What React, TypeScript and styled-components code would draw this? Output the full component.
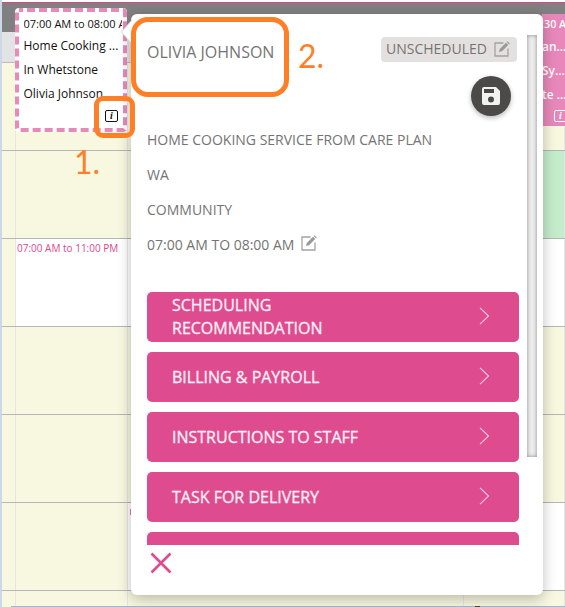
import React from "react";
import styled, { createGlobalStyle } from "styled-components";

const Global = createGlobalStyle`
  * { box-sizing: border-box; }
  body { margin: 0; background: #fff; font-family: "Open Sans", sans-serif; overflow: hidden; }
`;

const Page = styled.div`
  position: relative;
  width: 565px;
  height: 607px;
  padding-top: 2px;
  border-left: 2px solid #cdd7ea;
  overflow: hidden;
  background: #fff;
`;
const HeaderBar = styled.div`
  height: 30px;
  border-top: 1px solid #d94688;
  background: #808080;
`;
const SubHeader = styled.div`
  height: 31px;
  background: #e2e3e4;
  border-bottom: 1px solid #bcbcbe;
`;
const Grid = styled.div`
  display: flex;
  flex-direction: column;
`;
const Row = styled.div`
  display: grid;
  grid-template-columns: 14px 112px 336px 1fr;
  height: 88px;
  border-bottom: 1px solid #b5b5ba;
`;
const Cell = styled.div<{ $bg?: string }>`
  background: ${(p) => p.$bg || "#f8f8e0"};
  border-right: 1px solid #e6e6e4;
`;
const Shift = styled.div`
  padding: 2px 0 0 1px;
  font-size: 10px;
  line-height: 14px;
  white-space: nowrap;
  color: #dc4a8d;
`;
const Sliver = styled.div`
  width: 2px;
  height: 6px;
  margin: 6px 0 0 2px;
  background: #e479ab;
`;
const BottomLine = styled.div`
  position: absolute;
  left: 9px;
  right: 0;
  bottom: 0;
  height: 1px;
  background: #a9b4cc;
`;
const Tick = styled.div`
  position: absolute;
  left: 473px;
  bottom: 0;
  width: 5px;
  height: 1px;
  background: #59443c;
`;

const Visit = styled.div`
  position: absolute;
  left: 13px;
  top: 8px;
  width: 112px;
  height: 124px;
  padding: 7px 0 0 8.5px;
  background: #fff;
  border-radius: 4px;
  overflow: hidden;
`;
const Dashes = styled.svg`
  position: absolute;
  inset: 0;
`;
const VisitLine = styled.div<{ $small?: boolean }>`
  width: ${(p) => (p.$small ? 98 : 102)}px;
  overflow: hidden;
  white-space: nowrap;
  color: #111;
  font-size: ${(p) => (p.$small ? 11 : 12)}px;
  line-height: ${(p) => (p.$small ? 17 : 24)}px;
  height: ${(p) => (p.$small ? 19 : 24)}px;
`;
const InfoBox = styled.div<{ $light?: boolean }>`
  position: absolute;
  left: ${(p) => (p.$light ? 12 : 90)}px;
  top: ${(p) => (p.$light ? 96 : 102)}px;
  width: 13px;
  height: 12px;
  border: 1px solid ${(p) => (p.$light ? "#fff" : "#111")};
  border-radius: 2px;
  color: ${(p) => (p.$light ? "#fff" : "#111")};
  font: italic bold 10px/10px "Liberation Serif", serif;
  text-align: center;
`;
const PinkVisit = styled.div`
  position: absolute;
  left: 540px;
  top: 14px;
  width: 23px;
  height: 112px;
  background: #e888ba;
  overflow: hidden;
  color: #fff;
  font-weight: 600;
`;
const PinkLine = styled.div<{ $small?: boolean }>`
  height: ${(p) => (p.$small ? 20 : 24)}px;
  margin-left: ${(p) => (p.$small ? -1 : 0)}px;
  font-size: ${(p) => (p.$small ? 10.8 : 11.9)}px;
  line-height: ${(p) => (p.$small ? 20 : 24)}px;
  white-space: nowrap;
`;

const Popover = styled.section`
  position: absolute;
  left: 129px;
  top: 14px;
  width: 412px;
  height: 581px;
  padding: 0 16px;
  background: #fff;
  border-radius: 6px;
  box-shadow: 0 4px 14px rgba(0, 0, 0, 0.26);
  color: #747474;
`;
const Pointer = styled.svg`
  position: absolute;
  left: -10px;
  top: 6px;
`;
const Scroll = styled.div`
  display: flex;
  flex-direction: column;
  width: 372px;
  height: 531px;
  overflow: hidden;
`;
const TitleRow = styled.header`
  display: flex;
  flex: none;
  justify-content: space-between;
  height: 62px;
  padding: 23px 2px 0 0;
`;
const Name = styled.div`
  font-size: 16px;
  line-height: 30px;
`;
const Status = styled.div`
  display: flex;
  align-items: center;
  justify-content: space-between;
  width: 136px;
  height: 25px;
  padding: 0 7px 2px 5px;
  border-radius: 4px;
  background: #e4e0e0;
  font-size: 14px;
`;
const Save = styled.button`
  display: grid;
  place-items: center;
  align-self: flex-end;
  flex: none;
  width: 40px;
  height: 40px;
  margin-right: 8px;
  padding: 0;
  border: 0;
  border-radius: 50%;
  background: #4c4a49;
  box-shadow: 0 2px 5px rgba(0, 0, 0, 0.28);
`;
const Details = styled.div`
  flex: none;
  margin-top: 6px;
  height: 170px;
`;
const Detail = styled.div`
  display: flex;
  align-items: center;
  gap: 7px;
  height: 35px;
  font-size: 14px;
  white-space: nowrap;
  svg { margin-top: -3px; }
`;
const Action = styled.button`
  display: flex;
  align-items: center;
  justify-content: space-between;
  flex: none;
  width: 372px;
  height: 50px;
  margin-bottom: 10px;
  padding: 0 29px 0 25px;
  border: 0;
  border-radius: 5px;
  background: #de4c8f;
  color: #fff0f7;
  font: 500 16px/23px "Open Sans", sans-serif;
  text-align: left;
  svg { margin-top: -2px; }
`;
const ActionLabel = styled.span`
  width: 210px;
  -webkit-text-stroke: 0.3px #fff0f7;
`;
const Rail = styled.div`
  position: absolute;
  left: 396px;
  top: 21px;
  width: 10px;
  height: 422px;
  background: #eee;
  box-shadow: inset 0 0 4px #888;
`;
const Close = styled.button`
  display: block;
  margin-top: 7px;
  margin-left: 3px;
  padding: 0;
  border: 0;
  background: none;
  height: 22px;
`;
const Highlight = styled.div<{ $x: number; $y: number; $w: number; $h: number; $r: number }>`
  position: absolute;
  left: ${(p) => p.$x}px;
  top: ${(p) => p.$y}px;
  width: ${(p) => p.$w}px;
  height: ${(p) => p.$h}px;
  border: 5px solid #ff7f27;
  border-radius: ${(p) => p.$r}px;
`;
const Step = styled.div<{ $x: number; $y: number }>`
  position: absolute;
  left: ${(p) => p.$x}px;
  top: ${(p) => p.$y}px;
  color: #ff7f27;
  font-family: Lato, sans-serif;
  font-size: 32px;
  line-height: 36px;
`;

const EditIcon = () => (
  <svg width="16" height="16" viewBox="0 0 16 16" fill="none">
    <path d="M9.5 2H1v13h13V7.5" stroke="#a3a3a3" strokeWidth="1.3" />
    <path d="M5 11l.8-3L12 1.8l2.2 2.2L8 10.2z" fill="#999" />
    <path d="M12.7 1.1l.7-.8L15.8 2.6l-.8.8z" fill="#999" />
  </svg>
);

const Chevron = () => (
  <svg width="11" height="18" viewBox="0 0 11 18" fill="none">
    <path d="M1 .8L9.5 9 1 17.2" stroke="#f8c8df" strokeWidth="1.1" />
  </svg>
);

const rows = ["", "", "07:00 AM to 11:00 PM", "", "", "", ""];
const whiteRight = [2, 5];
const actions = ["SCHEDULING RECOMMENDATION", "BILLING & PAYROLL", "INSTRUCTIONS TO STAFF", "TASK FOR DELIVERY", ""];

export default function App() {
  return (
    <>
      <Global />
      <Page>
        <HeaderBar />
        <SubHeader />
        <Grid>
          {rows.map((text, i) => (
            <Row key={i}>
              <Cell />
              <Cell $bg={text ? "#fff" : undefined}>{text && <Shift>{text}</Shift>}</Cell>
              <Cell $bg={whiteRight.includes(i) ? "#fff" : undefined}>{i === 5 && <Sliver />}</Cell>
              <Cell $bg={i === 1 ? "#c4eccb" : whiteRight.includes(i) ? "#fff" : undefined} />
            </Row>
          ))}
        </Grid>
        <BottomLine />
        <Tick />
        <PinkVisit>
          <PinkLine $small>:30 AM</PinkLine>
          <PinkLine>an...</PinkLine>
          <PinkLine>Sy...</PinkLine>
          <PinkLine>te ...</PinkLine>
          <InfoBox $light>i</InfoBox>
        </PinkVisit>
        <Visit>
          <Dashes width="112" height="124">
            <rect x="2" y="2" width="108" height="120" rx="2" fill="none" stroke="#e78aba" strokeWidth="4" strokeDasharray="8 4" strokeDashoffset="4" />
          </Dashes>
          <VisitLine $small>07:00 AM to 08:00 AM</VisitLine>
          <VisitLine>Home Cooking ...</VisitLine>
          <VisitLine>In Whetstone</VisitLine>
          <VisitLine>Olivia Johnson</VisitLine>
          <InfoBox>i</InfoBox>
        </Visit>
        <Popover>
          <Pointer width="11" height="24" viewBox="0 0 11 24">
            <path d="M11 0L0 12l11 12z" fill="#fff" />
            <path d="M11 0L.5 12l10.5 12" fill="none" stroke="#d5d5d5" />
          </Pointer>
          <Scroll>
            <TitleRow>
              <Name>OLIVIA JOHNSON</Name>
              <Status>UNSCHEDULED <EditIcon /></Status>
            </TitleRow>
            <Save aria-label="Save">
              <svg width="18" height="18" viewBox="0 0 18 18">
                <path fillRule="evenodd" d="M2 0h12l4 4v12q0 2-2 2H2q-2 0-2-2V2Q0 0 2 0zM2 2v4h10V2zM9 9.5a3 3 0 1 0 0 6a3 3 0 0 0 0-6z" fill="#f2f2f2" />
              </svg>
            </Save>
            <Details>
              <Detail>HOME COOKING SERVICE FROM CARE PLAN</Detail>
              <Detail>WA</Detail>
              <Detail>COMMUNITY</Detail>
              <Detail>07:00 AM TO 08:00 AM <EditIcon /></Detail>
            </Details>
            {actions.map((label, i) => (
              <Action key={i}>
                <ActionLabel>{label}</ActionLabel>
                {label && <Chevron />}
              </Action>
            ))}
          </Scroll>
          <Rail />
          <Close aria-label="Close">
            <svg width="22" height="22" viewBox="0 0 22 22">
              <path d="M1.5 1.5l19 19M20.5 1.5l-19 19" stroke="#de4c8f" strokeWidth="2.6" />
            </svg>
          </Close>
        </Popover>
        <Highlight $x={92} $y={96} $w={41} $h={42} $r={9} />
        <Highlight $x={129} $y={17} $w={158} $h={80} $r={17} />
        <Step $x={72} $y={144}>1.</Step>
        <Step $x={296} $y={38}>2.</Step>
      </Page>
    </>
  );
}
